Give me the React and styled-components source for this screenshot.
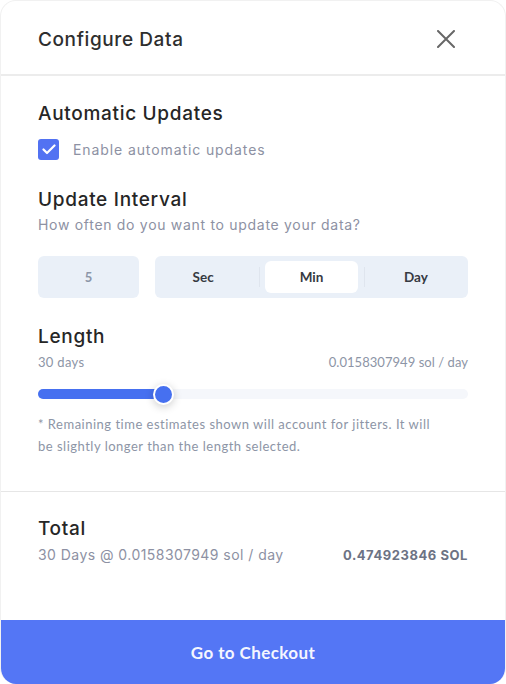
import React from "react";
import styled, { createGlobalStyle } from "styled-components";

const Global = createGlobalStyle`
  html, body { margin: 0; padding: 0; background: #ffffff; }
  * { box-sizing: border-box; }
`;

const heading = `"Inter", "Open Sans", sans-serif`;
const body = `"Lato", "Liberation Sans", sans-serif`;

const Modal = styled.div`
  width: 506px;
  height: 684px;
  display: flex;
  flex-direction: column;
  background: #fff;
  border: 1px solid #f1f1f1;
  border-bottom: 0;
  border-radius: 16px;
  overflow: hidden;
`;

const Header = styled.div`
  height: 75px;
  flex: none;
  display: flex;
  align-items: center;
  justify-content: space-between;
  padding: 3px 50px 0 37px;
  border-bottom: 2px solid #ececec;
`;

const Title = styled.h1`
  margin: 0;
  font-family: ${heading};
  font-size: 19px;
  font-weight: 500;
  color: #2e2e2e;
  letter-spacing: 0.6px;
`;

const Close = styled.button`
  border: 0;
  background: none;
  padding: 0;
  width: 18px;
  height: 18px;
  display: flex;
`;

const Body = styled.div`
  padding: 26px 37px 34px;
  border-bottom: 1px solid #e6e6e6;
`;

const SectionTitle = styled.h2`
  margin: ${(p) => p.$mt || 0}px 0 0;
  font-family: ${heading};
  font-size: 19px;
  line-height: 24px;
  font-weight: 500;
  color: #262626;
  letter-spacing: 0.7px;
`;

const CheckRow = styled.label`
  margin-top: 12px;
  display: flex;
  align-items: center;
  gap: 14px;
  height: 22px;
`;

const Box = styled.span`
  width: 21px;
  height: 21px;
  border-radius: 3px;
  background: #5272f2;
  display: flex;
  align-items: center;
  justify-content: center;
`;

const CheckLabel = styled.span`
  font-family: ${heading};
  font-size: 14px;
  color: #8d91a3;
  letter-spacing: 0.9px;
`;

const SubText = styled.p`
  margin: 3px 0 0;
  font-family: ${heading};
  font-size: 14px;
  line-height: 20px;
  color: #8d91a3;
  letter-spacing: 0.7px;
`;

const Controls = styled.div`
  margin-top: 21px;
  display: grid;
  grid-template-columns: 101px 1fr;
  gap: 16px;
  height: 42px;
`;

const NumberBox = styled.div`
  background: #eaf0f8;
  border-radius: 6px;
  display: flex;
  align-items: center;
  justify-content: center;
  font-family: ${body};
  font-weight: 700;
  font-size: 13px;
  color: #8c96a8;
`;

const Segmented = styled.div`
  background: #eaf0f8;
  border-radius: 6px;
  padding: 5px 0;
  display: grid;
  grid-template-columns: 1fr 1fr 1fr;
`;

const Segment = styled.div`
  position: relative;
  display: flex;
  align-items: stretch;
  padding: 0 ${(p) => (p.$first ? "8px 0 0" : "6px")};
  &::before {
    content: "";
    display: ${(p) => (p.$first ? "none" : "block")};
    position: absolute;
    left: 0;
    top: 6px;
    bottom: 6px;
    width: 1px;
    background: #dfe5ee;
  }
`;

const SegmentLabel = styled.span`
  flex: 1;
  display: flex;
  align-items: center;
  justify-content: center;
  border-radius: 6px;
  background: ${(p) => (p.$active ? "#ffffff" : "transparent")};
  font-family: ${body};
  font-weight: 700;
  font-size: 13.5px;
  color: #363a42;
`;

const InfoRow = styled.div`
  margin-top: 3px;
  display: flex;
  justify-content: space-between;
  font-family: ${body};
  font-size: 13px;
  line-height: 20px;
  color: #8d95a6;
  letter-spacing: 0.3px;
`;

const Rate = styled.span`
  letter-spacing: 0.05px;
`;

const Track = styled.div`
  position: relative;
  margin-top: 17px;
  height: 10px;
  border-radius: 5px;
  background: #f5f7fb;
`;

const Fill = styled.div`
  height: 100%;
  border-radius: 5px;
  background: #4670f0;
`;

const Thumb = styled.div`
  position: absolute;
  top: 50%;
  width: 21px;
  height: 21px;
  margin-left: -11px;
  margin-top: -10.5px;
  border-radius: 50%;
  background: #4670f0;
  border: 2px solid #fff;
  box-shadow: 0 2px 8px rgba(0, 0, 0, 0.2);
`;

const Note = styled.p`
  margin: 14px 0 0;
  width: 400px;
  font-family: ${body};
  font-size: 13px;
  line-height: 22px;
  color: #8d95a6;
  letter-spacing: 0.5px;
`;

const Summary = styled.div`
  padding: 25px 37px 0;
`;

const TotalRow = styled.div`
  margin-top: 4px;
  display: flex;
  justify-content: space-between;
  align-items: center;
  line-height: 20px;
`;

const TotalText = styled.span`
  font-family: ${heading};
  font-size: 14px;
  color: #8d91a3;
  letter-spacing: 0.45px;
`;

const TotalValue = styled.span`
  font-family: ${heading};
  font-size: 13px;
  font-weight: 700;
  color: #6d7384;
  letter-spacing: 0.55px;
`;

const Spacer = styled.div`
  flex: 1;
`;

const Checkout = styled.button`
  flex: none;
  height: 64px;
  width: 100%;
  border: 0;
  background: #5476f5;
  color: #f4f6ff;
  font-family: ${body};
  font-weight: 700;
  font-size: 17px;
  letter-spacing: 0.4px;
`;

export default function App() {
  const pct = 29.3;
  return (
    <>
      <Global />
      <Modal>
        <Header>
          <Title>Configure Data</Title>
          <Close aria-label="close">
            <svg width="18" height="18" viewBox="0 0 18 18">
              <path d="M1 1 L17 17 M17 1 L1 17" stroke="#676767" strokeWidth="2" strokeLinecap="round" />
            </svg>
          </Close>
        </Header>
        <Body>
          <SectionTitle>Automatic Updates</SectionTitle>
          <CheckRow>
            <Box>
              <svg width="14" height="11" viewBox="0 0 14 11">
                <path d="M1.5 5.5 L5 9 L12.5 1.5" fill="none" stroke="#fff" strokeWidth="2.2" strokeLinecap="round" strokeLinejoin="round" />
              </svg>
            </Box>
            <CheckLabel>Enable automatic updates</CheckLabel>
          </CheckRow>
          <SectionTitle $mt={28}>Update Interval</SectionTitle>
          <SubText>How often do you want to update your data?</SubText>
          <Controls>
            <NumberBox>5</NumberBox>
            <Segmented>
              <Segment $first>
                <SegmentLabel>Sec</SegmentLabel>
              </Segment>
              <Segment>
                <SegmentLabel $active>Min</SegmentLabel>
              </Segment>
              <Segment>
                <SegmentLabel>Day</SegmentLabel>
              </Segment>
            </Segmented>
          </Controls>
          <SectionTitle $mt={27}>Length</SectionTitle>
          <InfoRow>
            <span>30 days</span>
            <Rate>0.0158307949 sol / day</Rate>
          </InfoRow>
          <Track>
            <Fill style={{ width: `${pct}%` }} />
            <Thumb style={{ left: `${pct}%` }} />
          </Track>
          <Note>
            * Remaining time estimates shown will account for jitters. It will be slightly longer than the length selected.
          </Note>
        </Body>
        <Summary>
          <SectionTitle>Total</SectionTitle>
          <TotalRow>
            <TotalText>30 Days @ 0.0158307949 sol / day</TotalText>
            <TotalValue>0.474923846 SOL</TotalValue>
          </TotalRow>
        </Summary>
        <Spacer />
        <Checkout>Go to Checkout</Checkout>
      </Modal>
    </>
  );
}
